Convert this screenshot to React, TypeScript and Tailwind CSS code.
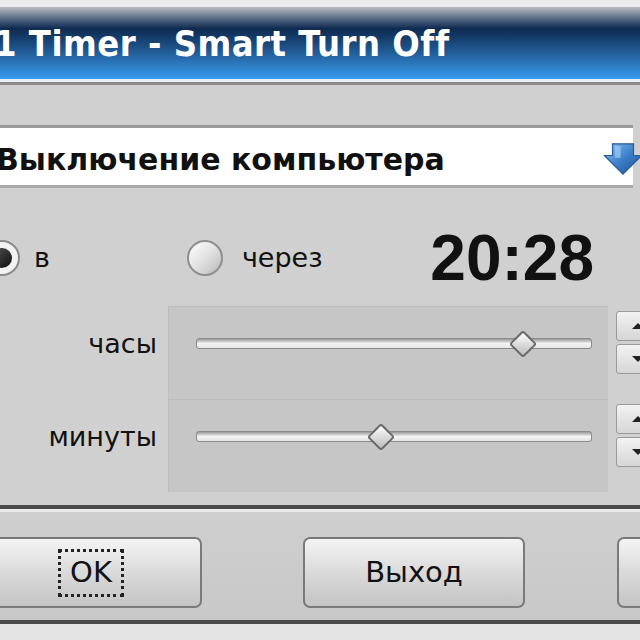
import React from 'react';

const FONT = { fontFamily: '"DejaVu Sans", "Noto Sans", sans-serif' };

function Slider({ pos }: { pos: number }) {
  return (
    <div className="relative h-[30px] w-[396px]">
      {/* трек */}
      <div className="absolute left-0 right-0 top-[9px] h-[11px] rounded-[3px] border border-[#8a8a8a] bg-gradient-to-b from-[#9a9a9a] via-[#f4f4f4] to-[#e4e4e4]" />
      {/* ползунок */}
      <div
        className="absolute top-[1px] h-[28px] w-[26px]"
        style={{ left: pos - 13 }}
      >
        <div className="absolute left-[3px] top-[4px] h-[20px] w-[20px] rotate-45 rounded-[3px] border-2 border-[#6a6a6a] bg-gradient-to-br from-[#ffffff] via-[#dcdcdc] to-[#bdbdbd]" />
      </div>
    </div>
  );
}

function Spinner() {
  return (
    <div className="flex flex-col gap-[3px]">
      <div className="flex h-[30px] w-[34px] items-center justify-center rounded-[3px] border border-[#9a9a9a] bg-gradient-to-b from-[#f2f2f2] to-[#d6d6d6] pl-[10px]">
        <div className="h-0 w-0 border-x-[6px] border-b-[6px] border-x-transparent border-b-[#222]" />
      </div>
      <div className="flex h-[30px] w-[34px] items-center justify-center rounded-[3px] border border-[#9a9a9a] bg-gradient-to-b from-[#f2f2f2] to-[#d6d6d6] pl-[10px]">
        <div className="h-0 w-0 border-x-[6px] border-t-[6px] border-x-transparent border-t-[#222]" />
      </div>
    </div>
  );
}

function SliderRow({ label, pos }: { label: string; pos: number }) {
  return (
    <div className="flex h-[93px] items-start">
      <div className="mt-[21px] w-[168px] shrink-0 pr-[11px] text-right text-[27px] leading-[34px] text-[#111]">{label}</div>
      <div className="flex h-full w-[440px] shrink-0 items-start border-t border-l border-[#bcbcbc] bg-[#c6c6c6] pl-[27px] pt-[22px]">
        <Slider pos={pos} />
      </div>
      <div className="ml-[8px] mt-[5px] shrink-0">
        <Spinner />
      </div>
    </div>
  );
}

function Btn({ children, className }: { children?: React.ReactNode; className: string }) {
  return (
    <div
      className={`flex h-[71px] shrink-0 items-center justify-center rounded-[7px] border-2 border-[#7a7a7a] bg-gradient-to-b from-[#f4f4f4] via-[#dadada] to-[#c4c4c4] ${className}`}
    >
      {children}
    </div>
  );
}

export default function App() {
  return (
    <div className="flex h-[640px] w-[640px] flex-col overflow-hidden bg-[#d0d0d0]" style={FONT}>
      <div className="h-[7px] bg-[#ececec]" />
      {/* заголовок окна */}
      <div className="flex h-[72px] items-center bg-gradient-to-b from-[#b8bcc2] via-[#0e2a50] via-30% to-[#3a9cf0]">
        <span
          className="-ml-[6px] mt-[2px] text-[36px] font-bold tracking-[0.5px] text-white"
          style={{ fontFamily: '"DejaVu Sans Condensed", "DejaVu Sans", sans-serif' }}
        >
          1 Timer - Smart Turn Off
        </span>
      </div>
      <div className="h-[3px] bg-[#e6eef6]" />
      <div className="h-[3px] bg-[#8a8a8a]" />

      <div className="h-[40px]" />
      {/* выпадающий список */}
      <div className="mr-[7px] flex h-[63px] items-center border-y-[3px] border-t-[#9a9a9a] border-b-[#a8a8a8] bg-white">
        <span className="-ml-[4px] mt-[6px] text-[30px] font-bold text-[#111]">Выключение компьютера</span>
        <div className="-mr-[12px] ml-auto mt-[4px]">
          <svg width="44" height="42" viewBox="0 0 36 36">
            <defs>
              <linearGradient id="ag" x1="0" y1="0" x2="1" y2="1">
                <stop offset="0" stopColor="#8ec4f2" />
                <stop offset="0.5" stopColor="#3a7fc8" />
                <stop offset="1" stopColor="#1d4f94" />
              </linearGradient>
            </defs>
            <path d="M9 5 L27 5 L27 15 L34 15 L18 31 L2 15 L9 15 Z" fill="url(#ag)" stroke="#2a5a9a" strokeWidth="1" />
            <path d="M11 7 L16 7 L16 17 L11 17 Z" fill="#a8d4fa" opacity="0.6" />
          </svg>
        </div>
      </div>

      <div className="h-[28px]" />
      {/* режим */}
      <div className="flex h-[84px] items-center">
        <div className="-ml-[16px] flex h-[36px] w-[36px] shrink-0 items-center justify-center rounded-full border-2 border-[#8a8a8a] bg-[#f2f2f2]">
          <div className="h-[20px] w-[20px] rounded-full bg-gradient-to-br from-[#555] to-[#111]" />
        </div>
        <span className="ml-[14px] text-[27px] text-[#111]">в</span>
        <div className="ml-[137px] h-[36px] w-[36px] shrink-0 rounded-full border-2 border-[#8f8f8f] bg-gradient-to-br from-[#ffffff] via-[#e2e2e2] to-[#b8b8b8]" />
        <span className="ml-[19px] text-[27px] text-[#111]">через</span>
        <span
          className="ml-auto mr-[46px] text-[64px] font-bold leading-none text-[#111]"
          style={{ fontFamily: '"Liberation Sans", Arial, sans-serif' }}
        >
          20:28
        </span>
      </div>

      <div className="h-[6px]" />
      <SliderRow label="часы" pos={327} />
      <SliderRow label="минуты" pos={185} />

      <div className="h-[13px]" />
      <div className="h-[4px] bg-[#4a4a4a]" />
      <div className="h-[3px] bg-[#ececec]" />
      {/* кнопки */}
      <div className="flex h-[108px] items-end bg-gradient-to-b from-[#cfcfcf] to-[#c8c8c8] pb-[12px]">
        <Btn className="-ml-[8px] w-[210px]">
          <div className="-ml-[12px] flex h-[48px] w-[66px] items-center justify-center border-[3px] border-dotted border-[#222]">
            <span className="text-[29px] text-[#111]">OK</span>
          </div>
        </Btn>
        <Btn className="ml-[101px] w-[222px]">
          <span className="text-[29px] text-[#111]">Выход</span>
        </Btn>
        <Btn className="ml-[92px] w-[60px]" />
      </div>
      <div className="h-[4px] bg-[#4a4a4a]" />
      <div className="flex-1 bg-[#e4e4e4]" />
    </div>
  );
}
